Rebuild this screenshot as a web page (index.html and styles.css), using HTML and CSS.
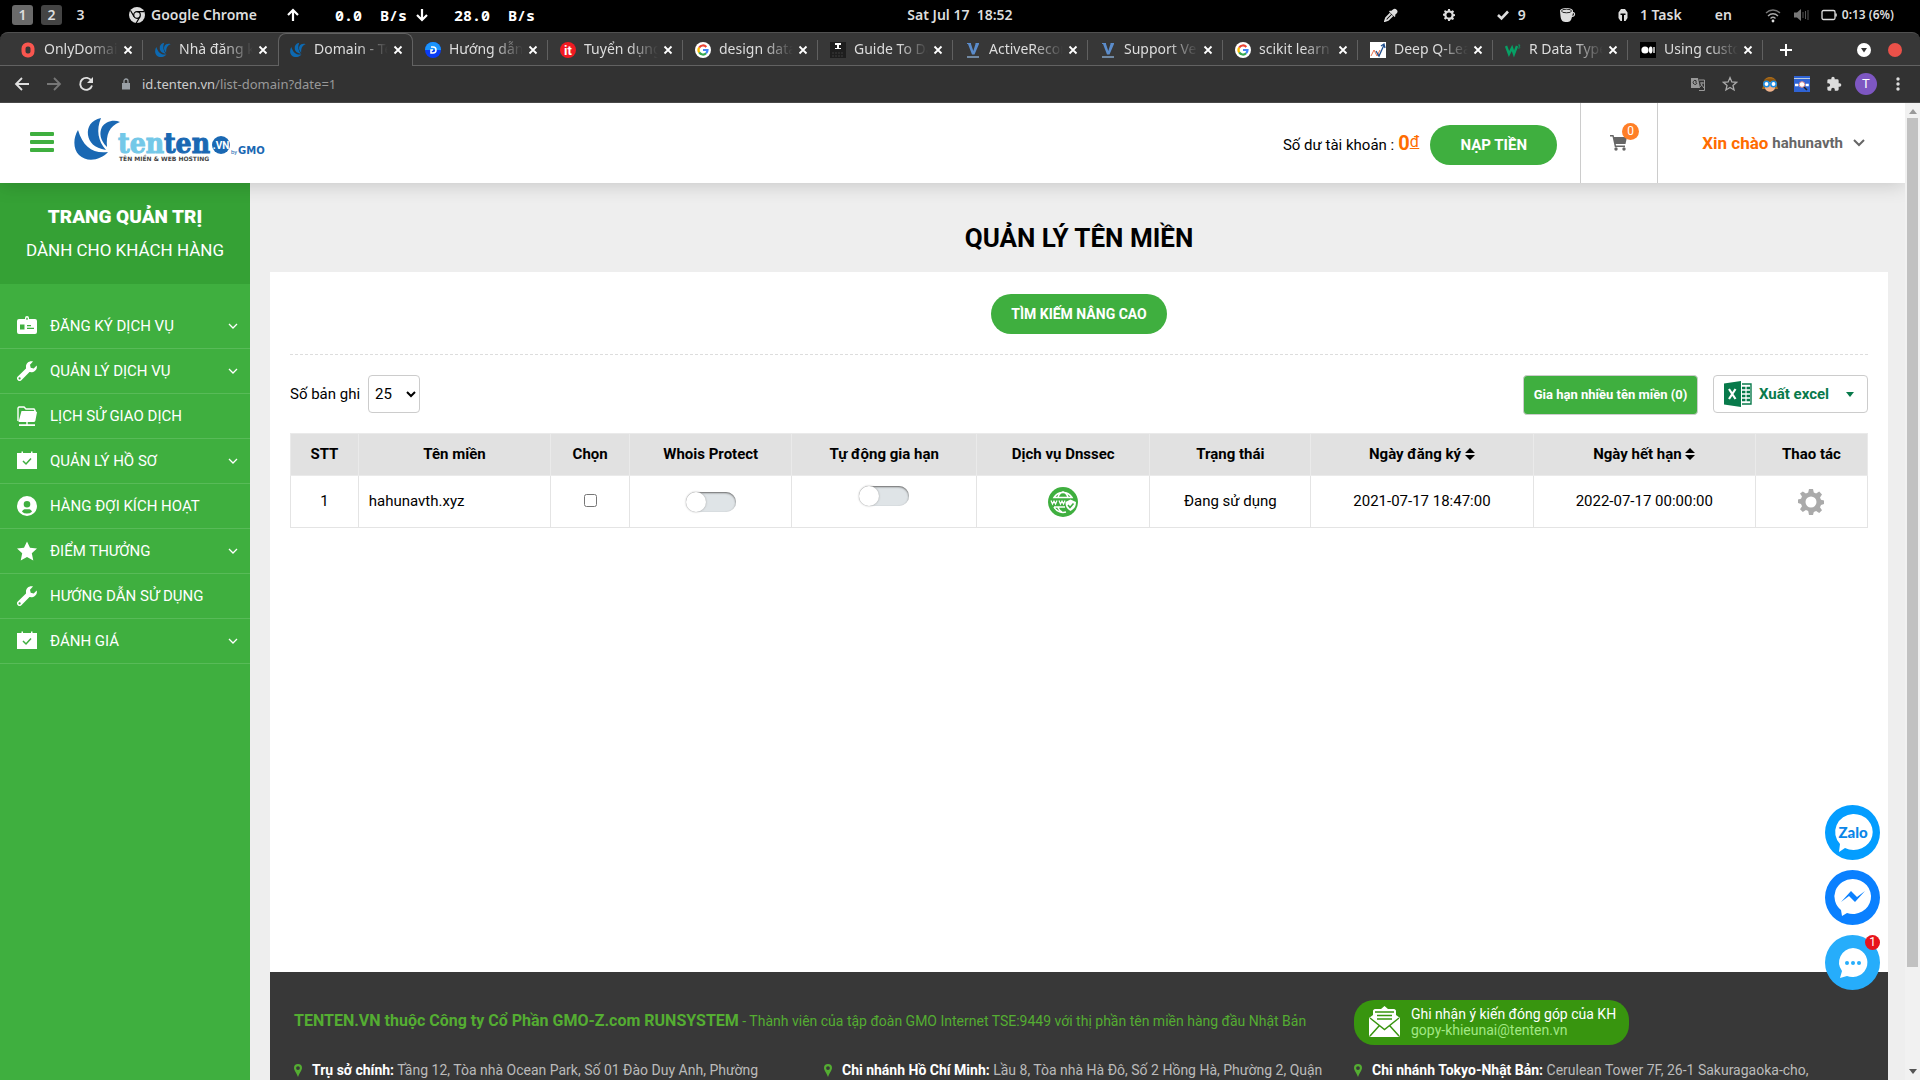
FILE: index.html
```html
<!DOCTYPE html>
<html lang="vi">
<head>
<meta charset="utf-8">
<title>Domain - Tenten</title>
<link rel="stylesheet" href="styles.css">
</head>
<body>
<svg class="defs" aria-hidden="true">
  <symbol id="swirl" viewBox="0 0 47 42"><path d="M4 12C-1 20-1 31 5 37c8 8 22 5 29-3C19 36 9 29 4 12z"/><path d="M27 0C17 2 13 9 14 17c1 7 6 13 18 15C24 23 22 12 27 0z"/><path d="M46 4C39 1 31 4 28 9c-3 6-2 13 5 20C32 17 35 8 46 4z"/></symbol>
  <symbol id="x" viewBox="0 0 10 10"><path d="M1.500 1.500l7 7M8.500 1.500l-7 7" fill="none" stroke="currentColor" stroke-width="1.800"/></symbol>
  <symbol id="google" viewBox="0 0 16 16"><circle cx="8" cy="8" r="8" fill="#fff"/><g fill="none" stroke-width="2.200"><path d="M4.200 5.600A4.500 4.500 0 0 1 11.300 4.900" stroke="#ea4335"/><path d="M4.200 5.600a4.500 4.500 0 0 0 0 4.800" stroke="#fbbc05"/><path d="M4.200 10.400a4.500 4.500 0 0 0 6.900.9" stroke="#34a853"/><path d="M8 8h4.500a4.500 4.500 0 0 1-1.400 3.300" stroke="#4285f4"/></g></symbol>
  <symbol id="vee" viewBox="0 0 16 16"><path d="M2 1h4v1L8.300 9 10.500 2V1H14v1L9.500 12.500H7L3 2H2z" fill="#5b8ccb"/><path d="M2 14h12v2H2z" fill="#7189a3"/></symbol>
  <symbol id="gear" viewBox="0 0 26 26"><path fill-rule="evenodd" d="M11 0h4l.8 3.600 2.300 1L21.200 2.600l2.800 2.800-2 3.200 1 2.200 3 .7v3.500l-3 .9-1 2.300 2 3.100-2.800 2.800-3.100-2-2.300 1L15 26h-4l-.8-3.900-2.300-1-3.100 2L2 20.300l2-3.100-1-2.300-3-.9v-3.500l3-.7 1-2.200-2-3.200L4.800 2.600l3.100 2 2.300-1zM13 7.500a5.500 5.500 0 1 0 0 11 5.500 5.500 0 0 0 0-11z"/></symbol>
  <symbol id="down" viewBox="0 0 10 6"><path d="M1 1l4 4 4-4" fill="none" stroke="currentColor" stroke-width="1.300"/></symbol>
  <symbol id="card" viewBox="0 0 20 20"><path fill-rule="evenodd" d="M8 2a2 2 0 0 1 4 0v1h6a2 2 0 0 1 2 2v11a2 2 0 0 1-2 2H2a2 2 0 0 1-2-2V5a2 2 0 0 1 2-2h6zM9.300 1.800v2h1.400v-2zM3 8.500v5h4.500v-5zM10 9v1.200h4V9zm0 2.800V13h7v-1.200z"/></symbol>
  <symbol id="wrench" viewBox="0 0 20 20"><path fill-rule="evenodd" d="M19.700 4.500l-3 3-3-.7-.7-3L16 .5C12.500-.6 8.500 2 9 6.500v1L.8 15.600a2.500 2.500 0 0 0 3.600 3.600L12.500 11c4 .9 8.300-2 7.200-6.500zM2.600 16.300a1.100 1.100 0 1 1 0 2.200 1.100 1.100 0 0 1 0-2.200z"/></symbol>
  <symbol id="folder" viewBox="0 0 20 20"><path d="M1 15V2l1-1h5l2 2h8l1 1.500V6" fill="none" stroke="currentColor" stroke-width="1.400"/><path d="M4.500 5h14L20 6.200 18.300 15l-1 1H1.500zM9.300 16h1.400v2.300H18V20H2v-1.700h7.300z"/></symbol>
  <symbol id="calcheck" viewBox="0 0 20 20"><path d="M0 2h4.500V.5H6V2h8V.5h1.500V2H20v16H0z"/><path d="M6 10l3 3 5-5.500" fill="none" stroke="#3faf3f" stroke-width="1.500"/></symbol>
  <symbol id="user" viewBox="0 0 20 20"><path fill-rule="evenodd" d="M10 0a10 10 0 1 0 0 20 10 10 0 0 0 0-20zm0 5a3.300 3.300 0 1 1 0 6.600A3.300 3.300 0 0 1 10 5zM5 15.700c1-3 3-2.500 5-2.500s4-.5 5 2.500a7.500 7.500 0 0 1-10 0z"/></symbol>
  <symbol id="star" viewBox="0 0 20 20"><path d="M10 .5l3 6.300 7 .8-5.200 4.700 1.500 7.200L10 16l-6.300 3.500 1.500-7.200L0 7.600l7-.8z"/></symbol>
  <symbol id="sort" viewBox="0 0 10 12"><path d="M5 0l5 5H0zM0 7h10l-5 5z"/></symbol>
  <symbol id="pin" viewBox="0 0 8 13"><path fill-rule="evenodd" d="M4 0a4 4 0 0 0-4 4c0 2 2 4 4 9 2-5 4-7 4-9a4 4 0 0 0-4-4zm0 2.200a1.900 1.900 0 1 1 0 3.800 1.900 1.900 0 0 1 0-3.800z"/></symbol>
</svg>

<header class="sysbar">
  <div class="sys-left">
    <span class="ws ws-on">1</span><span class="ws ws-mid">2</span><span class="ws">3</span>
    <svg class="i16 sys-chrome" viewBox="0 0 16 16"><circle cx="8" cy="8" r="8"/><circle cx="8" cy="8" r="3.300" fill="none" stroke="#000" stroke-width="1.200"/><path d="M8 4.700h7.300M5.100 9.700L1.500 3.500M10.900 9.700L7.300 16" stroke="#000" stroke-width="1.200"/></svg>
    <span>Google Chrome</span>
    <svg class="arrow arrow-up" viewBox="0 0 12 14"><path d="M6 13V2M1 7l5-5 5 5" fill="none" stroke="#fff" stroke-width="2.200"/></svg>
    <span class="mono rate-up">0.0&nbsp; B/s</span>
    <svg class="arrow arrow-dn" viewBox="0 0 12 14"><path d="M6 1v11M1 7l5 5 5-5" fill="none" stroke="#fff" stroke-width="2.200"/></svg>
    <span class="mono rate-dn">28.0&nbsp; B/s</span>
  </div>
  <div class="sys-date">Sat Jul 17&nbsp; 18:52</div>
  <div class="sys-right">
    <svg class="i14" viewBox="0 0 14 14"><path d="M9 1.500c2-2.500 6 1 4 3.500L11 7l.5 1-1 1L5 3.500l1-1 1 .5z"/><path d="M6.500 5.500L2 10l-1 3 3-1 4.500-4.500" fill="none" stroke="#ddd" stroke-width="1.800"/></svg>
    <svg class="i12 s-gear"><use href="#gear"/></svg>
    <svg class="i12 s-check" viewBox="0 0 12 12"><path d="M1 6l3.500 3.500L11 2.500" fill="none" stroke="#ddd" stroke-width="2.600"/></svg>
    <span class="s-nine">9</span>
    <svg class="i16 s-cup" viewBox="0 0 16 16"><path d="M0 4c0-4 13-4 13 0v1c3 0 3 5-1 5-1 4-2 5-5.500 5S1 14 .5 9z"/><ellipse cx="6.500" cy="4" rx="5" ry="1.800" fill="none" stroke="#222"/><path d="M13 6c1.500 0 1 3-.7 3z" fill="#000"/></svg>
    <svg class="i14 s-task" viewBox="0 0 14 14"><path d="M2.500 4.500L5 1h4l2.500 3.500V10L9.500 13H8V7h1.500V5.500h-5V7H6v6H4.500l-2-3z"/></svg>
    <span class="s-tasks">1 Task</span>
    <span class="s-lang">en</span>
    <svg class="i16 s-wifi" viewBox="0 0 16 16"><g fill="none" stroke="#aaa" stroke-width="1.300"><path d="M1 6c4-4 10-4 14 0" stroke="#777"/><path d="M3 9c3-3 7-3 10 0M5.500 11.500c1.500-1.500 3.500-1.500 5 0"/></g><circle cx="8" cy="14" r="1.400"/></svg>
    <svg class="i16 s-vol" viewBox="0 0 16 16"><path d="M1 5.500h3L8 2v12l-4-3.500H1z" fill="#777"/><path d="M10 5v6M12.500 4v8M15 3v10" stroke="#555"/></svg>
    <svg class="i16 s-bat" viewBox="0 0 16 16"><rect x="1" y="3.500" width="13" height="9" rx="1.500" fill="none" stroke="#ddd" stroke-width="1.300"/><path d="M15 6.500v3" stroke="#ddd" stroke-width="1.500"/></svg>
    <span class="s-time">0:13 (6%)</span>
  </div>
</header>

<nav class="tabs">
  <div class="tab"><svg class="fav" viewBox="0 0 16 16"><rect x="3.500" y="2.500" width="9" height="11" rx="4" fill="none" stroke="#f9564f" stroke-width="4"/></svg><span>OnlyDomains</span><svg class="x"><use href="#x"/></svg></div>
  <div class="tab"><svg class="fav blue"><use href="#swirl"/></svg><span>Nhà đăng ký</span><svg class="x"><use href="#x"/></svg></div>
  <div class="tab active"><svg class="fav blue"><use href="#swirl"/></svg><span>Domain - Tenten</span><svg class="x"><use href="#x"/></svg></div>
  <div class="tab"><svg class="fav" viewBox="0 0 16 16"><circle cx="8" cy="8" r="8" fill="#0a3cf5"/><path d="M0 8a8 8 0 0 1 16 0z" fill="#1a94fb"/><path d="M6 5h2a3 3 0 0 1 0 6H6V8h2" fill="none" stroke="#fff" stroke-width="1.500"/></svg><span>Hướng dẫn sử</span><svg class="x"><use href="#x"/></svg></div>
  <div class="tab"><svg class="fav" viewBox="0 0 16 16"><circle cx="8" cy="8" r="8" fill="#f01a22"/><text x="8" y="13" text-anchor="middle" class="favtxt">it</text></svg><span>Tuyển dụng</span><svg class="x"><use href="#x"/></svg></div>
  <div class="tab"><svg class="fav"><use href="#google"/></svg><span>design database</span><svg class="x"><use href="#x"/></svg></div>
  <div class="tab"><svg class="fav" viewBox="0 0 16 16"><path d="M0 0h16v16H0z" fill="#1e1e1e"/><path d="M5 1h6v2H9v3h2v1H5V6h2V3H5z" fill="#fff"/><path d="M2 11h12M2 14h12" stroke="#3c3c3c" stroke-dasharray="2 1"/></svg><span>Guide To Data</span><svg class="x"><use href="#x"/></svg></div>
  <div class="tab"><svg class="fav"><use href="#vee"/></svg><span>ActiveRecord</span><svg class="x"><use href="#x"/></svg></div>
  <div class="tab"><svg class="fav"><use href="#vee"/></svg><span>Support Vector</span><svg class="x"><use href="#x"/></svg></div>
  <div class="tab"><svg class="fav"><use href="#google"/></svg><span>scikit learn m</span><svg class="x"><use href="#x"/></svg></div>
  <div class="tab"><svg class="fav" viewBox="0 0 16 16"><path d="M0 0h16v16H0z" fill="#fff"/><path d="M1 14l3-6 3 6 3-6" fill="none" stroke="#e8704c"/><path d="M6 9l3 5 5-11M11 4l3-2 1 4" fill="none" stroke="#1f4e8c" stroke-width="1.300"/></svg><span>Deep Q-Learning</span><svg class="x"><use href="#x"/></svg></div>
  <div class="tab"><svg class="fav" viewBox="0 0 16 16"><path d="M1 4l3 8 3-6 2 6 3-8" fill="none" stroke="#07a065" stroke-width="2.400"/><path d="M13 3h2l-1 1.500c2 0 1 2-1 1.500" fill="none" stroke="#07a065" stroke-width=".8"/></svg><span>R Data Types</span><svg class="x"><use href="#x"/></svg></div>
  <div class="tab"><svg class="fav" viewBox="0 0 16 16"><path d="M0 0h16v16H0z" fill="#000"/><circle cx="5" cy="8" r="3.600" fill="#fff"/><ellipse cx="10.700" cy="8" rx="1.800" ry="3.400" fill="#fff"/><path d="M14 5v6" stroke="#fff" stroke-width="1.300"/></svg><span>Using custom</span><svg class="x"><use href="#x"/></svg></div>
  <svg class="plus" viewBox="0 0 12 12"><path d="M6 0v12M0 6h12" stroke="#fff" stroke-width="2"/></svg>
  <svg class="win win-first" viewBox="0 0 14 14"><circle cx="7" cy="7" r="7" fill="#fff"/><path d="M4 5h6L7 9.500z" fill="#333"/></svg>
  <svg class="win" viewBox="0 0 14 14"><circle cx="7" cy="7" r="7" fill="#ea5149"/></svg>
</nav>

<div class="toolbar">
  <svg class="nav" viewBox="0 0 16 16"><path d="M15 8H2M8 2L2 8l6 6" fill="none" stroke="#e0e0e0" stroke-width="1.800"/></svg>
  <svg class="nav" viewBox="0 0 16 16"><path d="M1 8h13M8 2l6 6-6 6" fill="none" stroke="#777" stroke-width="1.800"/></svg>
  <svg class="nav" viewBox="0 0 16 16"><path d="M13.500 5A6 6 0 1 0 14 9.500" fill="none" stroke="#e0e0e0" stroke-width="1.900"/><path d="M15 1v6H9z" fill="#e0e0e0"/></svg>
  <svg class="lock" viewBox="0 0 8 12"><path d="M0 5h8v6.500H0z" fill="#9aa0a6"/><path d="M2 5V3a2 2 0 0 1 4 0v2" fill="none" stroke="#9aa0a6" stroke-width="1.300"/></svg>
  <span class="url">id.tenten.vn<span>/list-domain?date=1</span></span>
  <div class="tools">
    <svg class="i16" viewBox="0 0 16 16"><path d="M1 2h7l2 10H1z" fill="#999"/><path d="M9 4h5.500v10.500H9" fill="none" stroke="#999"/><path d="M7 6H5M7 7a2 2 0 1 1-.5-2" stroke="#333" fill="none"/><path d="M10 7h4M12 6v1c0 2-1 3-2 4M11 8l3 4" stroke="#999" fill="none"/></svg>
    <svg class="i16" viewBox="0 0 20 20"><path d="M10 2l2.300 5.400 5.900.5-4.500 3.900 1.400 5.700L10 14.400l-5.100 3.100 1.400-5.700L1.800 7.900l5.900-.5z" fill="none" stroke="#aaa" stroke-width="1.600"/></svg>
    <svg class="i16 ext-first" viewBox="0 0 16 16"><path d="M1 10C0-2 16-2 15 10l1 3H0z" fill="#a5691a"/><path d="M3 6h10v6c-1 5-9 5-10 0z" fill="#f1b48c"/><path d="M2 4c4-2 8-2 12 0v2H2z" fill="#8a5410"/><circle cx="4.500" cy="8" r="2.700" fill="#fff" stroke="#1c8be0" stroke-width="1.600"/><circle cx="11.500" cy="8" r="2.700" fill="#fff" stroke="#1c8be0" stroke-width="1.600"/></svg>
    <svg class="i16" viewBox="0 0 16 16"><path d="M0 0h16v16H0z" fill="#2f63d4"/><path d="M0 2.500h16" stroke="#bcd"/><path d="M1 9h14" stroke="#fff" stroke-width="2.400" stroke-dasharray="3 .6"/><circle cx="8" cy="8.500" r="2.800" fill="#fff" stroke="#d88"/><path d="M10 11l3 3" stroke="#222" stroke-width="1.500"/></svg>
    <svg class="i16" viewBox="0 0 24 24"><path d="M20.500 11H19V7a2 2 0 0 0-2-2h-4V3.500a2.500 2.500 0 0 0-5 0V5H4a2 2 0 0 0-2 2v3.800h1.500a2.700 2.700 0 0 1 0 5.400H2V20a2 2 0 0 0 2 2h3.800v-1.500a2.700 2.700 0 0 1 5.400 0V22H17a2 2 0 0 0 2-2v-4h1.500a2.500 2.500 0 0 0 0-5z" fill="#ddd"/></svg>
    <span class="avatar">T</span>
    <svg class="dots" viewBox="0 0 4 14"><circle cx="2" cy="2" r="1.700"/><circle cx="2" cy="7" r="1.700"/><circle cx="2" cy="12" r="1.700"/></svg>
  </div>
</div>

<div class="viewport">
  <div class="page">
    <header class="site-head">
      <button class="burger" aria-label="Menu"><i></i><i></i><i></i></button>
      <a class="logo" href="#" aria-label="Tenten">
        <svg viewBox="0 0 192 44"><use href="#swirl" width="47" height="42" y="0" fill="#1a68b3"/>
          <text x="44" y="35" class="lg-ten"><tspan fill="#74c8e8" stroke="#74c8e8">ten</tspan><tspan fill="#1a68b3" stroke="#1a68b3">ten</tspan></text>
          <circle cx="147" cy="27" r="9" fill="#1a68b3"/><text x="147" y="31" class="lg-vn">.VN</text>
          <text x="157" y="36" class="lg-by">by</text><text x="164" y="36" class="lg-gmo">GMO</text>
          <text x="45" y="43" class="lg-sub">TÊN MIỀN &amp; WEB HOSTING</text></svg>
      </a>
      <div class="balance"><span>Số dư tài khoản :</span><b>0<u>đ</u></b></div>
      <button class="pill pay">NẠP TIỀN</button>
      <a class="cart" href="#" aria-label="Giỏ hàng"><svg viewBox="0 0 18 16"><path d="M0 0h3.500l.6 2H17l-1.500 7H5.700l.3 1.500h9V12H4.800L2.500 1.500H0z"/><circle cx="6" cy="14" r="1.700"/><circle cx="14" cy="14" r="1.700"/></svg><em>0</em></a>
      <a class="account" href="#"><strong>Xin chào</strong><span>hahunavth</span><svg viewBox="0 0 12 8"><path d="M1 1l5 5 5-5" fill="none" stroke="#666" stroke-width="2"/></svg></a>
    </header>
    <div class="body">
      <aside class="side">
        <div class="side-head"><strong>TRANG QUẢN TRỊ</strong><span>DÀNH CHO KHÁCH HÀNG</span></div>
        <ul class="menu">
          <li><a href="#"><svg><use href="#card"/></svg><span>ĐĂNG KÝ DỊCH VỤ</span><svg class="chev"><use href="#down"/></svg></a></li>
          <li><a href="#"><svg><use href="#wrench"/></svg><span>QUẢN LÝ DỊCH VỤ</span><svg class="chev"><use href="#down"/></svg></a></li>
          <li><a href="#"><svg><use href="#folder"/></svg><span>LỊCH SỬ GIAO DỊCH</span></a></li>
          <li><a href="#"><svg><use href="#calcheck"/></svg><span>QUẢN LÝ HỒ SƠ</span><svg class="chev"><use href="#down"/></svg></a></li>
          <li><a href="#"><svg><use href="#user"/></svg><span>HÀNG ĐỢI KÍCH HOẠT</span></a></li>
          <li><a href="#"><svg><use href="#star"/></svg><span>ĐIỂM THƯỞNG</span><svg class="chev"><use href="#down"/></svg></a></li>
          <li><a href="#"><svg><use href="#wrench"/></svg><span>HƯỚNG DẪN SỬ DỤNG</span></a></li>
          <li><a href="#"><svg><use href="#calcheck"/></svg><span>ĐÁNH GIÁ</span><svg class="chev"><use href="#down"/></svg></a></li>
        </ul>
      </aside>
      <main class="main">
        <h1>QUẢN LÝ TÊN MIỀN</h1>
        <section class="panel">
          <div class="search"><button class="pill find">TÌM KIẾM NÂNG CAO</button></div>
          <div class="controls">
            <label for="size">Số bản ghi</label>
            <select id="size"><option>25</option><option>50</option></select>
            <button class="renew">Gia hạn nhiều tên miền (0)</button>
            <button class="excel"><svg class="xl" viewBox="0 0 28 26"><path d="M0 2.500L17 0v26L0 23.500z" fill="#087a4b"/><path d="M18 3h9v20h-9" fill="none" stroke="#087a4b" stroke-width="1.400"/><path d="M18 7h8M18 11h8M18 15h8M18 19h8" stroke="#087a4b" stroke-width="2.400"/><path d="M22 4v18" stroke="#fff" stroke-width="1.200"/><path d="M5 8l6.500 10M11.500 8L5 18" stroke="#fff" stroke-width="2.200"/></svg><span>Xuất excel</span><svg class="caret" viewBox="0 0 8 5"><path d="M0 0h8L4 5z"/></svg></button>
          </div>
          <table>
            <colgroup><col class="c1"><col class="c2"><col class="c3"><col class="c4"><col class="c5"><col class="c6"><col class="c7"><col class="c8"><col class="c8"><col class="c10"></colgroup>
            <thead><tr><th>STT</th><th>Tên miền</th><th>Chọn</th><th>Whois Protect</th><th>Tự động gia hạn</th><th>Dịch vụ Dnssec</th><th>Trạng thái</th><th>Ngày đăng ký <svg class="sort"><use href="#sort"/></svg></th><th>Ngày hết hạn <svg class="sort"><use href="#sort"/></svg></th><th>Thao tác</th></tr></thead>
            <tbody><tr>
              <td>1</td><td class="name">hahunavth.xyz</td>
              <td><input type="checkbox" class="tick" aria-label="Chọn hahunavth.xyz"></td>
              <td><input type="checkbox" class="switch" aria-label="Whois Protect"></td>
              <td class="top"><input type="checkbox" class="switch" aria-label="Tự động gia hạn"></td>
              <td><svg class="dns" viewBox="0 0 30 30"><circle cx="15" cy="15" r="15" fill="#3faf3f"/><g fill="none" stroke="#fff" stroke-width="1.500"><path d="M6 10.500a10.500 10.500 0 0 1 18 0zM6 20a10.500 10.500 0 0 0 12 5M6 20h11M15 5c-3 1-4.500 3-5 5.500M15 5c3 1 4.500 3 5 5.500M14 25c-2-1-3.500-3-4-5"/><path d="M3 13.500l1.500 3.500L6 14l1.500 3L9 13.500M11 13.500l1.500 3.500 1.500-3 1.500 3 1.500-3.500" stroke-width="1.200"/></g><path d="M17.500 15l5-2.500 5.500 2.500c0 5-2 7-5.500 9-3.500-2-5-4-5-9z" fill="#fff"/><path d="M20 18l2 2.500 3.500-4" fill="none" stroke="#3faf3f" stroke-width="1.600"/></svg></td>
              <td>Đang sử dụng</td><td>2021-07-17 18:47:00</td><td>2022-07-17 00:00:00</td>
              <td><svg class="act"><use href="#gear"/></svg></td>
            </tr></tbody>
          </table>
        </section>
        <footer class="foot">
          <p class="company"><b>TENTEN.VN thuộc Công ty Cổ Phần GMO-Z.com RUNSYSTEM</b> - Thành viên của tập đoàn GMO Internet TSE:9449 với thị phần tên miền hàng đầu Nhật Bản</p>
          <a class="feedback" href="#"><svg viewBox="0 0 31 31"><path d="M0 12l4-3V5c0-1 1-2 2-2h6l3.500-3L19 3h6c1 0 2 1 2 2v4l4 3v17c0 1-1 2-2 2H2c-1 0-2-1-2-2z" fill="#fff"/><path d="M1 12l14.500 11.500L30 12M1 30l9-10M30 30l-9-10" fill="none" stroke="#38950f" stroke-width="1.500"/><path d="M6 6h19M8 9.500h15M8 13h15" stroke="#38950f" stroke-width="1.500"/></svg><span>Ghi nhận ý kiến đóng góp của KH<em>gopy-khieunai@tenten.vn</em></span></a>
          <p class="addr"><svg><use href="#pin"/></svg><span><b>Trụ sở chính:</b> Tầng 12, Tòa nhà Ocean Park, Số 01 Đào Duy Anh, Phường</span></p>
          <p class="addr"><svg><use href="#pin"/></svg><span><b>Chi nhánh Hồ Chí Minh:</b> Lầu 8, Tòa nhà Hà Đô, Số 2 Hồng Hà, Phường 2, Quận</span></p>
          <p class="addr"><svg><use href="#pin"/></svg><span><b>Chi nhánh Tokyo-Nhật Bản:</b> Cerulean Tower 7F, 26-1 Sakuragaoka-cho,</span></p>
        </footer>
      </main>
    </div>
  </div>
  <div class="scroll"><svg viewBox="0 0 8 5"><path d="M0 5h8L4 0z" fill="#999"/></svg><i></i><svg viewBox="0 0 8 5"><path d="M0 0h8L4 5z" fill="#555"/></svg></div>
  <div class="floats">
    <a href="#" aria-label="Zalo"><svg viewBox="0 0 55 55"><circle cx="27.500" cy="27.500" r="27.500" fill="#039dff"/><path d="M28 9a19 18 0 1 1-8 34l-6 4 1-8A19 18 0 0 1 28 9z" fill="#fff"/><text x="28" y="33" text-anchor="middle" class="zalo">Zalo</text></svg></a>
    <a href="#" aria-label="Messenger"><svg viewBox="0 0 55 55"><circle cx="27.500" cy="27.500" r="27.500" fill="#0a80ff"/><path d="M28 9a18 17.500 0 1 1-6 34l-5 3-1-6A18 17.500 0 0 1 28 9z" fill="#fff"/><path d="M16 32l10-11 6 6 8-6-10 11-6-6z" fill="#0a80ff"/></svg></a>
    <a href="#" aria-label="Chat"><svg viewBox="0 0 55 55"><circle cx="27.500" cy="27.500" r="27.500" fill="#26adfb"/><path d="M28 13a15 14.500 0 1 1-6 28l-7 2 2-7A15 14.500 0 0 1 28 13z" fill="#fff"/><g fill="#26adfb"><circle cx="22" cy="28" r="2"/><circle cx="28" cy="28" r="2"/><circle cx="34" cy="28" r="2"/></g></svg><em>1</em></a>
  </div>
</div>
</body>
</html>
```

FILE: styles.css
```css
* { box-sizing: border-box; }
html, body { height: 100%; margin: 0; }
body { display: flex; flex-direction: column; overflow: hidden; background: #000; font: 15px/20px Roboto, "Noto Sans", sans-serif; color: #000; }
a { color: inherit; text-decoration: none; }
button { font: inherit; border: 0; padding: 0; cursor: pointer; }
em { font-style: normal; }
p, ul, h1 { margin: 0; padding: 0; }
svg { flex: none; display: block; fill: currentColor; }
.defs { display: none; }
.i16 { width: 16px; height: 16px; }
.i14 { width: 14px; height: 14px; }
.i12 { width: 12px; height: 12px; }

/* desktop bar */
.sysbar { flex: none; height: 32px; padding-bottom: 2px; display: grid; grid-template-columns: 1fr auto 1fr; align-items: center; color: #ddd; font: 600 14px/20px "Noto Sans", sans-serif; white-space: nowrap; }
.sys-left { display: flex; align-items: center; padding-left: 12px; }
.ws { width: 21px; height: 20px; margin-right: 8px; border-radius: 3px; text-align: center; }
.ws-on { background: #6a6a6a; }
.ws-mid { background: #444; }
.sys-chrome { margin: 0 6px 0 30px; }
.arrow { width: 12px; height: 14px; }
.arrow-up { margin-left: 30px; }
.arrow-dn { margin-left: 9px; }
.mono { font: bold 15px/20px "Noto Sans Mono", "DejaVu Sans Mono", monospace; color: #fff; }
.rate-up { margin-left: 36px; }
.rate-dn { margin-left: 26px; }
.sys-right { display: flex; align-items: center; justify-content: flex-end; padding-right: 26px; }
.s-gear { margin-left: 45px; }
.s-check { margin-left: 42px; }
.s-nine { margin-left: 9px; }
.s-cup { margin-left: 34px; }
.s-task { margin-left: 40px; }
.s-tasks { margin-left: 10px; }
.s-lang { margin-left: 33px; }
.s-wifi { margin-left: 33px; }
.s-vol { margin-left: 12px; }
.s-bat { margin-left: 12px; }
.s-time { margin-left: 5px; font-size: 12px; }

/* browser tabs */
.tabs { flex: none; height: 34px; display: flex; align-items: center; padding: 0 18px 0 8px; background: #373737; border-top: 1px solid #505050; border-radius: 8px 8px 0 0; box-shadow: inset 0 -1px #626262; color: #ddd; font: 14px/20px "Noto Sans", sans-serif; }
.tab { flex: 0 1 135px; min-width: 0; height: 20px; display: flex; align-items: center; padding: 0 9px 0 12px; border-right: 1px solid #606060; }
.tab:has(+ .active) { border-color: transparent; }
.tab.active { align-self: stretch; height: auto; background: #323232; border: 1px solid #626262; border-bottom: 0; border-radius: 8px 8px 0 0; padding: 0 9px 0 11px; }
.tab span { flex: 1; min-width: 0; margin: -2px 5px 0 8px; overflow: hidden; white-space: nowrap; mask-image: linear-gradient(90deg, #000 60%, transparent); }
.fav { width: 16px; height: 16px; }
.fav.blue { color: #0d69b1; }
.favtxt { font: bold 13px Roboto, sans-serif; fill: #fff; }
.x { width: 10px; height: 10px; color: #fff; }
.plus { width: 12px; height: 12px; margin-left: 17px; }
.win { width: 14px; height: 14px; margin-left: 17px; }
.win-first { margin-left: auto; }

/* address bar */
.toolbar { flex: none; height: 37px; display: flex; align-items: center; padding: 0 20px 0 14px; background: #323232; border-bottom: 1px solid #484848; }
.nav { width: 16px; height: 16px; margin-right: 16px; }
.lock { width: 8px; height: 12px; margin: 0 12px; }
.url { color: #ccc; font: 13px/20px "Noto Sans", sans-serif; }
.url span { color: #999; }
.tools { margin-left: auto; display: flex; align-items: center; gap: 16px; }
.ext-first { margin-left: 8px; }
.avatar { width: 22px; height: 22px; margin: 0 -3px; border-radius: 50%; background: #7e57c2; color: #fff; font-size: 13px; line-height: 22px; text-align: center; }
.dots { width: 4px; height: 14px; margin: 0 0 0 6px; color: #ddd; }

.viewport { flex: 1; min-height: 0; display: flex; position: relative; background: #eee; }
.page { flex: 1; min-width: 0; display: flex; flex-direction: column; }

/* site header */
.site-head { flex: none; height: 80px; display: flex; align-items: center; position: relative; z-index: 1; background: #fff; box-shadow: 0 0 20px rgba(0,0,0,.2); clip-path: inset(0 0 -20px 0); }
.burger { width: 24px; margin: 0 20px 2px 30px; background: none; display: grid; gap: 4px; }
.burger i { height: 4px; border-radius: 1px; background: #3faf3f; }
.logo { margin-bottom: 6px; }
.logo svg { width: 192px; height: 44px; }
.lg-ten { font: bold 28px "DejaVu Serif Condensed", "DejaVu Serif", serif; stroke-width: 1px; }
.lg-vn { font: bold 10px Roboto, sans-serif; fill: #fff; text-anchor: middle; }
.lg-by { font: 6px Roboto, sans-serif; fill: #1a68b3; }
.lg-gmo { font: bold 10px "DejaVu Sans", sans-serif; fill: #1a68b3; }
.lg-sub { font: bold 6px "DejaVu Sans", sans-serif; fill: #444; }
.balance { margin: 1px 0 0 auto; display: flex; align-items: baseline; gap: 4px; }
.balance b { color: #ff6c00; font-size: 20px; }
.balance u { font-size: 16px; position: relative; top: -3px; font-weight: 400; }
.pill { height: 40px; border-radius: 20px; background: #3faf3f; color: #fff; font-weight: 700; }
.pay { width: 127px; margin: 4px 23px 0 11px; }
.cart { width: 78px; align-self: stretch; display: grid; place-items: center; position: relative; border: solid #ccc; border-width: 0 1px; color: #666; }
.cart svg { width: 18px; height: 16px; }
.cart em { position: absolute; left: 41px; top: 20px; width: 17px; height: 17px; border-radius: 50%; background: #ff7f27; color: #fff; font-size: 12px; line-height: 17px; text-align: center; }
.account { padding: 0 40px 0 44px; display: flex; align-items: center; }
.account strong { color: #ff6c00; font-size: 17px; }
.account span { margin: 0 10px 0 4px; color: #666; font-weight: 700; }
.account svg { width: 12px; height: 8px; }

/* sidebar */
.body { flex: 1; min-height: 0; display: flex; }
.side { flex: none; width: 250px; background: #3faf3f; color: #fff; }
.side-head { height: 101px; padding-top: 22px; background: #35a135; text-align: center; }
.side-head strong { display: block; font-size: 19px; font-weight: 900; line-height: 24px; }
.side-head span { display: block; margin-top: 9px; font-size: 17px; line-height: 24px; }
.menu { list-style: none; margin-top: 20px; }
.menu a { height: 45px; display: flex; align-items: center; padding: 0 12px 0 17px; border-bottom: 1px solid #58bb58; }
.menu svg { width: 20px; height: 20px; }
.menu span { flex: 1; margin-left: 13px; }
.menu .chev { width: 10px; height: 6px; }

/* content */
.main { flex: 1; min-width: 0; padding: 0 17px 0 20px; display: flex; flex-direction: column; }
h1 { padding: 39px 0 18px; font-size: 26px; line-height: 32px; font-weight: 700; text-align: center; }
.panel { flex: 1; padding: 22px 20px 0; background: #fff; }
.search { padding-bottom: 20px; border-bottom: 1px dashed #ddd; text-align: center; }
.find { width: 176px; font-size: 14px; }
.controls { display: flex; align-items: flex-start; margin: 20px 0 18px; }
.controls label { line-height: 38px; }
.controls select { width: 52px; height: 38px; margin: 0 auto 0 8px; padding: 0 2px; border: 1px solid #ccc; border-radius: 4px; background: #fff; color: #000; font: inherit; }
.renew { width: 175px; height: 40px; border: 1px solid #ccc; border-radius: 4px; background: #3faf3f; color: #fff; font-size: 13px; font-weight: 700; }
.excel { width: 155px; height: 38px; margin-left: 15px; padding: 0 13px 0 10px; display: flex; align-items: center; border: 1px solid #ccc; border-radius: 4px; background: #fff; color: #087a4b; font-weight: 700; }
.xl { width: 28px; height: 26px; }
.excel span { margin: 0 auto 0 7px; }
.caret { width: 8px; height: 5px; }

table { width: 100%; table-layout: fixed; border-collapse: collapse; text-align: center; }
.c1 { width: 4.3%; } .c2 { width: 12.2%; } .c3 { width: 5%; } .c4 { width: 10.300%; } .c5 { width: 11.700%; } .c6 { width: 11%; } .c7 { width: 10.200%; } .c8 { width: 14.100%; } .c10 { width: 7.100%; }
th { height: 42px; padding: 0 0 2px; border: 1px solid #eaeaea; background: #e1e1e1; font-weight: 700; }
td { height: 52px; padding: 0 0 2px; border: 1px solid #e4e4e4; }
.name { text-align: left; padding-left: 10px; }
.sort { display: inline-block; width: 10px; height: 12px; vertical-align: -1px; }
.tick { display: block; width: 13px; height: 13px; margin: 0 auto; }
.switch { appearance: none; display: block; position: relative; width: 50px; height: 20px; margin: 2px auto 0; border-radius: 10px; background: #dfe4e7; box-shadow: inset 0 1px 2px #666; }
.switch::before { content: ""; position: absolute; left: 0; top: 0; width: 20px; height: 20px; border-radius: 50%; background: #fff; box-shadow: 0 0 2px #999; }
.top { vertical-align: top; padding-top: 8px; }
.dns { width: 30px; height: 30px; margin: 2px auto 0; }
.act { width: 26px; height: 26px; margin: 2px auto 0; color: #aaa; }

.foot { flex: none; height: 108px; overflow: hidden; display: grid; grid-template-columns: repeat(3, 530px); grid-template-rows: 45px 20px; row-gap: 15px; padding: 28px 0 0 24px; background: #383838; color: #bbb; font-size: 14px; white-space: nowrap; }
.company { grid-column: span 2; line-height: 42px; color: #54ad32; }
.company b { font-size: 16px; font-weight: 700; }
.feedback { width: 275px; display: flex; align-items: center; padding: 0 0 2px 15px; border-radius: 20px; background: #38950f; color: #fff; line-height: 16px; }
.feedback svg { width: 31px; height: 31px; }
.feedback span { margin-left: 11px; }
.feedback em { display: block; color: #a2e884; }
.addr { display: flex; align-items: center; }
.addr svg { width: 8px; height: 13px; color: #54ad32; }
.addr span { margin-left: 10px; }
.addr b { color: #fff; font-weight: 700; }

/* scrollbar */
.scroll { flex: none; width: 15px; display: flex; flex-direction: column; align-items: center; padding: 6px 0; background: #f1f1f1; }
.scroll svg { width: 8px; height: 5px; }
.scroll i { width: 11px; height: 88%; margin: 4px 0 auto; background: #c1c1c1; }

/* floating contact buttons */
.floats { position: absolute; z-index: 2; right: 40px; bottom: 90px; display: grid; gap: 10px; }
.floats a { position: relative; }
.floats svg { width: 55px; height: 55px; }
.floats em { position: absolute; right: 0; top: 0; width: 15px; height: 15px; border-radius: 50%; background: #e8141b; color: #fff; font-size: 12px; line-height: 15px; text-align: center; }
.zalo { font: 900 15px Lato, sans-serif; fill: #0a86e8; }
```
